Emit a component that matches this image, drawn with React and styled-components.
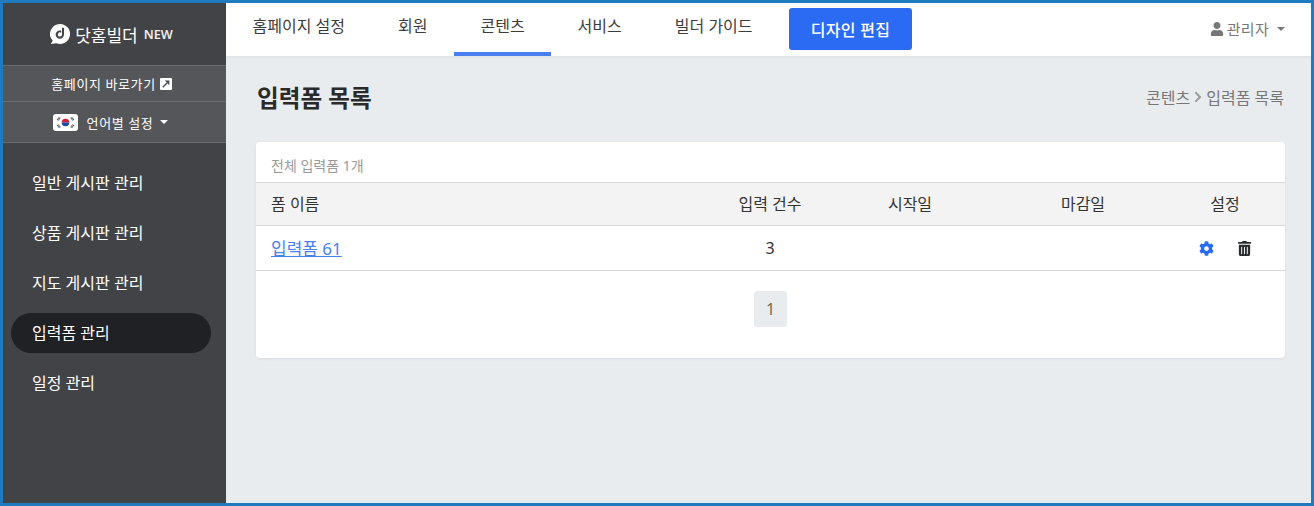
import React from 'react';
import styled, { createGlobalStyle } from 'styled-components';
import { FaCog, FaTrashAlt, FaUser, FaChevronRight } from 'react-icons/fa';

const GlobalStyle = createGlobalStyle`
    html, body {
        margin: 0;
        padding: 0;
    }
    body {
        font-family: "Noto Sans", "Noto Sans CJK KR", sans-serif;
        color: #212529;
    }
    * {
        box-sizing: border-box;
    }
`

const tabs = ['홈페이지 설정', '회원', '콘텐츠', '서비스', '빌더 가이드'];
const menus = ['일반 게시판 관리', '상품 게시판 관리', '지도 게시판 관리', '입력폼 관리', '일정 관리'];

const Logo = () => (
    <svg width="20" height="20" viewBox="0 0 20 20">
        <path d="M10 0a10 10 0 1 1-3.6 19.3L.8 20l1.9-3.2A10 10 0 0 1 10 0z" fill="#fff" />
        <path d="M12 3.4 14 4v6.6a4.2 4.2 0 1 1-4.2-4.2c.5 0 1 .1 1.4.2v2.3a2 2 0 1 0 .8 1.7z" fill="#434448" />
    </svg>
);

const LinkIcon = () => (
    <svg width="12" height="12" viewBox="0 0 12 12">
        <rect width="12" height="12" rx="1" fill="#fff" />
        <path d="M2.8 9.2 7 5" stroke="#4a4b4f" strokeWidth="1.4" fill="none" />
        <path d="M4.8 2.6h4.6v4.6z" fill="#4a4b4f" />
    </svg>
);

const Flag = () => (
    <FlagBox>
        <svg width="19" height="13" viewBox="0 0 19 13">
            <path d="M5.7 6.5a3.8 3.8 0 0 1 7.6 0z" fill="#d0213a" />
            <path d="M5.7 6.5a3.8 3.8 0 0 0 7.6 0z" fill="#1c4a9c" />
            <path d="M1 4 3.4 1M2 4.7 4.4 1.7M14.6 1.7 17 4.7M15.6 1 18 4M1 9l2.4 3M2 8.3l2.4 3M14.6 11.3 17 8.3M15.6 12 18 9" stroke="#222" strokeWidth="0.8" />
        </svg>
    </FlagBox>
);

const App = () => {
    return (
        <>
            <GlobalStyle />
            <Frame>
                <Sidebar>
                    <LogoWrap>
                        <Logo />
                        <LogoName>닷홈빌더</LogoName>
                        <LogoNew>NEW</LogoNew>
                    </LogoWrap>
                    <HomeLink>
                        홈페이지 바로가기
                        <LinkIcon />
                    </HomeLink>
                    <LangSelect>
                        <Flag />
                        언어별 설정
                        <Caret $color="#fff" />
                    </LangSelect>
                    <MenuList>
                        {menus.map((menu) => (
                            <MenuItem key={menu} $active={menu === '입력폼 관리'}>{menu}</MenuItem>
                        ))}
                    </MenuList>
                </Sidebar>
                <Main>
                    <TopBar>
                        <TabList>
                            {tabs.map((tab) => (
                                <Tab key={tab} $active={tab === '콘텐츠'}>{tab}</Tab>
                            ))}
                            <EditButton>디자인 편집</EditButton>
                        </TabList>
                        <UserMenu>
                            <FaUser size="14" />
                            관리자
                            <Caret $color="#777" />
                        </UserMenu>
                    </TopBar>
                    <Content>
                        <TitleRow>
                            <PageTitle>입력폼 목록</PageTitle>
                            <Breadcrumb>
                                콘텐츠
                                <FaChevronRight size="12" color="#999" />
                                입력폼 목록
                            </Breadcrumb>
                        </TitleRow>
                        <Card>
                            <Total>전체 입력폼 1개</Total>
                            <HeadRow>
                                <NameCell>폼 이름</NameCell>
                                <Cell>입력 건수</Cell>
                                <Cell>시작일</Cell>
                                <Cell>마감일</Cell>
                                <Cell>설정</Cell>
                            </HeadRow>
                            <BodyRow>
                                <NameCell><FormLink>입력폼 61</FormLink></NameCell>
                                <Cell>3</Cell>
                                <Cell />
                                <Cell />
                                <ActionCell>
                                    <FaCog size="15" color="#2b6bf3" />
                                    <FaTrashAlt size="15" color="#2a2c2e" />
                                </ActionCell>
                            </BodyRow>
                            <Pagination>
                                <PageButton>1</PageButton>
                            </Pagination>
                        </Card>
                    </Content>
                </Main>
            </Frame>
        </>
    );
};

export default App;

const Frame = styled.div`
    width: 1314px;
    height: 506px;
    border: 3px solid #1f7abf;
    display: flex;
    overflow: hidden;
    background-color: #e9ecef;
`

const Sidebar = styled.div`
    width: 223px;
    flex-shrink: 0;
    background-color: #424347;
    display: flex;
    flex-direction: column;
`

const LogoWrap = styled.div`
    height: 62px;
    display: flex;
    align-items: center;
    justify-content: center;
    gap: 5px;
    color: #fff;
    padding-right: 6px;
`

const LogoName = styled.div`
    font-size: 17px;
    font-weight: 400;
`

const LogoNew = styled.div`
    font-size: 12.6px;
    font-weight: 600;
    margin-left: 1px;
    color: #eee;
`

const HomeLink = styled.div`
    height: 36px;
    border-top: 1px solid #6b6c70;
    background-color: #55565a;
    display: flex;
    align-items: center;
    justify-content: center;
    gap: 4px;
    font-size: 13px;
    letter-spacing: 0.6px;
    color: #fff;
    padding-right: 6px;
`

const LangSelect = styled.div`
    height: 42px;
    border-top: 1px solid #6b6c70;
    border-bottom: 1px solid #6b6c70;
    background-color: #55565a;
    display: flex;
    align-items: center;
    justify-content: center;
    font-size: 13px;
    letter-spacing: 0.6px;
    color: #fff;
    padding-right: 8px;
`

const FlagBox = styled.div`
    width: 25px;
    height: 17px;
    border-radius: 3px;
    background-color: #fff;
    display: flex;
    align-items: center;
    justify-content: center;
    margin-right: 9px;
`

const Caret = styled.span`
    width: 0;
    height: 0;
    margin-left: 7px;
    border-top: 4px solid ${(props) => props.$color};
    border-left: 4px solid transparent;
    border-right: 4px solid transparent;
`

const MenuList = styled.div`
    display: flex;
    flex-direction: column;
    gap: 10px;
    padding: 20px 15px 0 8px;
`

const MenuItem = styled.div`
    height: 40px;
    border-radius: 20px;
    padding: 0 0 2px 21px;
    display: flex;
    align-items: center;
    font-size: 16px;
    color: #fff;
    background-color: ${(props) => (props.$active ? '#202124' : 'transparent')};
`

const Main = styled.div`
    flex: 1;
    min-width: 0;
    display: flex;
    flex-direction: column;
`

const TopBar = styled.div`
    height: 53px;
    background-color: #fff;
    display: flex;
    justify-content: space-between;
    box-shadow: 0 1px 3px rgba(0, 0, 0, 0.06);
`

const TabList = styled.div`
    display: flex;
    align-items: flex-start;
`

const Tab = styled.div`
    height: 53px;
    padding: 0 26.5px 5px;
    display: flex;
    align-items: center;
    font-size: 16px;
    color: #3c3c3c;
    border-bottom: 4px solid ${(props) => (props.$active ? '#4a7ff0' : 'transparent')};
`

const EditButton = styled.div`
    width: 123px;
    height: 42px;
    margin: 5px 0 0 10px;
    border-radius: 3px;
    background-color: #2b6bf3;
    color: #fff;
    font-size: 16px;
    letter-spacing: 0.3px;
    font-weight: 500;
    display: flex;
    align-items: center;
    justify-content: center;
`

const UserMenu = styled.div`
    display: flex;
    align-items: center;
    gap: 3px;
    padding: 0 26px 2px 0;
    font-size: 15px;
    letter-spacing: 0.3px;
    color: #777;

    span {
        margin-left: 5px;
    }
`

const Content = styled.div`
    flex: 1;
    padding: 0 26px 0 30px;
`

const TitleRow = styled.div`
    height: 86px;
    display: flex;
    align-items: center;
    justify-content: space-between;
`

const PageTitle = styled.div`
    font-size: 23.6px;
    font-weight: 700;
    color: #2a2a2a;
    padding: 0 0 5px 1px;
`

const Breadcrumb = styled.div`
    display: flex;
    align-items: center;
    gap: 2px;
    font-size: 16px;
    color: #777;
    padding: 0 1px 4px 0;
`

const Card = styled.div`
    height: 216px;
    border-radius: 4px;
    background-color: #fff;
    box-shadow: 0 1px 3px rgba(0, 0, 0, 0.06);
`

const Total = styled.div`
    height: 40px;
    padding: 14px 0 0 15px;
    font-size: 14px;
    line-height: 20px;
    color: #9a9a9a;
`

const HeadRow = styled.div`
    display: grid;
    grid-template-columns: 465px 98px 182px 164px 120px;
    height: 44px;
    padding-bottom: 2px;
    border-top: 1px solid #d8d8d8;
    border-bottom: 1px solid #d8d8d8;
    background-color: #f3f3f3;
    font-size: 16px;
    color: #333;
`

const BodyRow = styled.div`
    display: grid;
    grid-template-columns: 465px 98px 182px 164px 120px;
    height: 45px;
    padding-bottom: 1px;
    border-bottom: 1px solid #d8d8d8;
    font-size: 16px;
    color: #333;
`

const Cell = styled.div`
    display: flex;
    align-items: center;
    justify-content: center;
`

const NameCell = styled(Cell)`
    justify-content: flex-start;
    padding-left: 15px;
`

const ActionCell = styled(Cell)`
    gap: 23px;
    padding-top: 1px;
`

const FormLink = styled.a`
    color: #4a7ff0;
    font-size: 17px;
    text-decoration: underline;
`

const Pagination = styled.div`
    display: flex;
    justify-content: center;
    padding-top: 20px;
`

const PageButton = styled.div`
    width: 33px;
    height: 36px;
    border-radius: 3px;
    background-color: #e9ecef;
    color: #7a6a50;
    font-size: 16px;
    display: flex;
    align-items: center;
    justify-content: center;
`
